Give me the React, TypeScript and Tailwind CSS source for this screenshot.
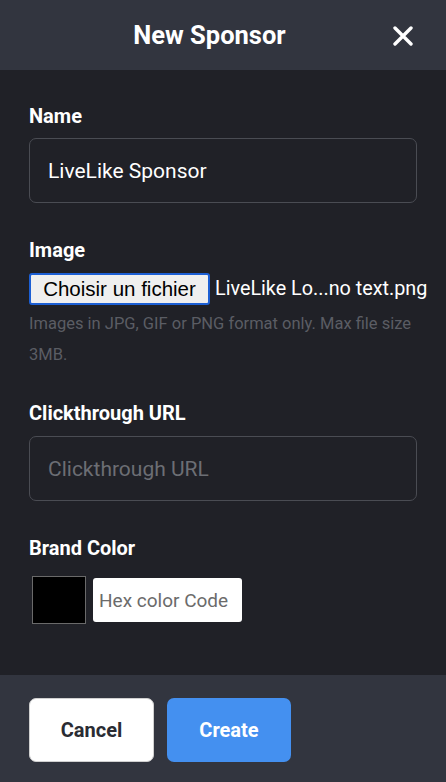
import React, { useState } from 'react';

const font = { fontFamily: 'Roboto, "Noto Sans", sans-serif' };

const CloseIcon: React.FC = () => (
    <svg width="20" height="20" viewBox="0 0 20 20" fill="none">
        <path d="M2 2 L18 18 M18 2 L2 18" stroke="white" strokeWidth="3.4" strokeLinecap="round" />
    </svg>
);

const App: React.FC = () => {
    const [name, setName] = useState('LiveLike Sponsor');
    const [url, setUrl] = useState('');
    const [hex, setHex] = useState('');

    return (
        <div className="w-[446px] h-[782px] flex flex-col bg-[#202127] text-white font-['Roboto',sans-serif]" style={font}>
            {/* header */}
            <div className="relative h-[70px] shrink-0 bg-[#32353f] flex items-center">
                <h2 className="w-full pr-[27px] text-center text-[25.5px] font-bold">New Sponsor</h2>
                <button className="absolute right-[33px] top-[26px]"><CloseIcon /></button>
            </div>

            {/* body */}
            <div className="flex-1 px-[29px] pt-[34px]">
                <label className="block text-[20px] font-bold leading-[24px]">Name</label>
                <input
                    value={name}
                    onChange={e => setName(e.target.value)}
                    className="mt-[10px] w-full h-[65px] rounded-[7px] border border-[#4a4c53] bg-transparent px-[18px] text-[21px] text-white outline-none"
                />

                <label className="block mt-[35px] text-[20px] font-bold leading-[24px]">Image</label>
                <div className="mt-[11px] flex items-center h-[32px]">
                    <button
                        className="h-[32px] w-[181px] shrink-0 rounded-[3px] border-2 border-[#1c5fd4] bg-[#efefef] text-black text-[20.5px] leading-none"
                        style={{ fontFamily: '"Liberation Sans", Arial, sans-serif' }}
                    >
                        Choisir un fichier
                    </button>
                    <span className="ml-[5px] text-[19.8px] whitespace-nowrap">LiveLike Lo...no text.png</span>
                </div>
                <p className="mt-[3px] text-[16.5px] leading-[31px] text-[#5b5d64]">
                    Images in JPG, GIF or PNG format only. Max file size 3MB.
                </p>

                <label className="block mt-[31px] text-[20px] font-bold leading-[24px]">Clickthrough URL</label>
                <input
                    value={url}
                    onChange={e => setUrl(e.target.value)}
                    placeholder="Clickthrough URL"
                    className="mt-[11px] w-full h-[65px] rounded-[7px] border border-[#4a4c53] bg-transparent px-[18px] text-[21px] text-white outline-none placeholder:text-[#6c6e74]"
                />

                <label className="block mt-[35px] text-[20px] font-bold leading-[24px]">Brand Color</label>
                <div className="mt-[16px] flex items-center gap-[7px] pl-[3px]">
                    <div className="w-[54px] h-[48px] bg-black border border-[#6a6a6a]" />
                    <input
                        value={hex}
                        onChange={e => setHex(e.target.value)}
                        placeholder="Hex color Code"
                        className="w-[149px] h-[44px] rounded-[3px] bg-white px-[6px] text-[19px] text-black outline-none placeholder:text-[#6b6b6b]"
                    />
                </div>
            </div>

            {/* footer */}
            <div className="h-[107px] shrink-0 bg-[#32353f] px-[29px] pt-[23px] flex items-start gap-[13px]">
                <button className="w-[125px] h-[64px] rounded-[7px] bg-white text-[#2a2c33] text-[20px] font-bold border border-[#d0d0d0]">Cancel</button>
                <button className="w-[124px] h-[64px] rounded-[7px] bg-[#4490f0] text-white text-[20px] font-bold">Create</button>
            </div>
        </div>
    );
};

export default App;
